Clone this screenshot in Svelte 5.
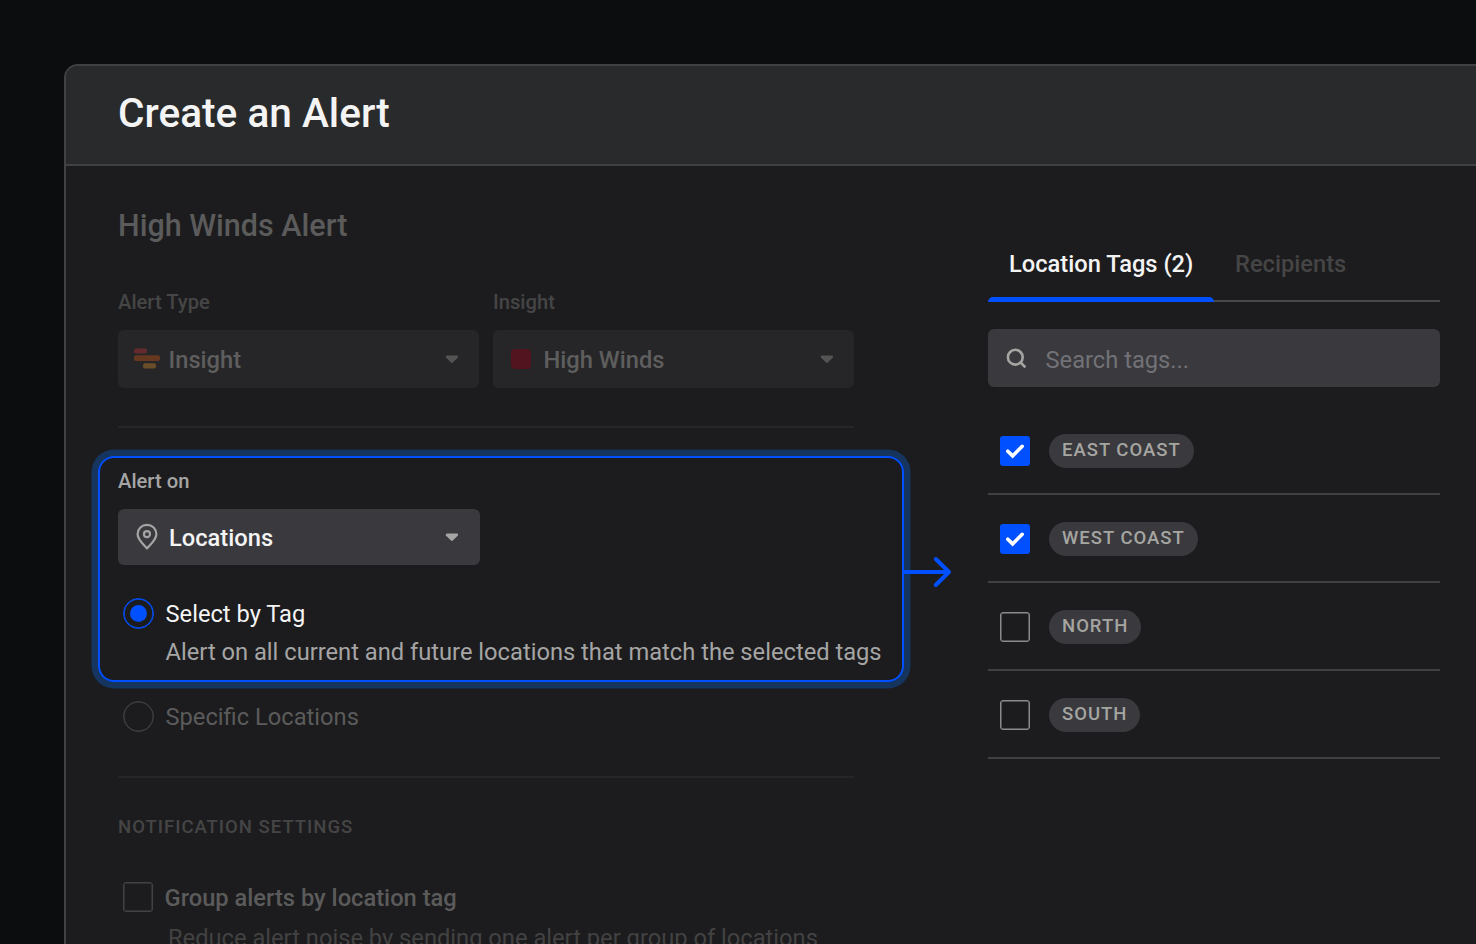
<script lang="ts">
    let tags = $state([
        { name: "East Coast", checked: true },
        { name: "West Coast", checked: true },
        { name: "North", checked: false },
        { name: "South", checked: false },
    ]);
    let selectBy = $state("tag");
    let grouped = $state(false);
    let search = $state("");

    let count = $derived(tags.filter((t) => t.checked).length);
</script>

{#snippet caret()}
    <svg class="caret" width="14" height="10" viewBox="0 0 14 10">
        <path
            d="M2 1.8h9.8L6.9 6.6z"
            fill="currentColor"
            stroke="currentColor"
            stroke-width="2.6"
            stroke-linejoin="round"
        />
    </svg>
{/snippet}

<div class="page">
    <div class="modal">
        <header>
            <h1>Create an Alert</h1>
        </header>
        <div class="body">
            <section class="form">
                <h2>High Winds Alert</h2>

                <div class="selects">
                    <div class="field muted">
                        <span class="label">Alert Type</span>
                        <button class="select">
                            <svg class="bars" width="26" height="22" viewBox="0 0 26 22">
                                <rect width="13" height="5" y="0.5" rx="2" fill="#652a2d" />
                                <rect width="26" height="5.6" y="7.3" rx="2" fill="#663820" />
                                <rect width="13" height="5.2" x="9" y="15.2" rx="2" fill="#6a4d29" />
                            </svg>
                            <span>Insight</span>
                            {@render caret()}
                        </button>
                    </div>
                    <div class="field muted">
                        <span class="label">Insight</span>
                        <button class="select">
                            <i class="swatch"></i>
                            <span>High Winds</span>
                            {@render caret()}
                        </button>
                    </div>
                </div>

                <hr />

                <div class="callout">
                    <span class="label">Alert on</span>
                    <button class="select active">
                        <svg class="pin" width="22" height="28" viewBox="0 0 22 28" fill="none" stroke="#a5a5a5" stroke-width="2.2">
                            <path
                                d="M11 25.4C7.6 21.6 1.6 16.5 1.6 11.2a9.4 9.4 0 0 1 18.8 0c0 5.3-6 10.4-9.4 14.2z"
                                stroke-linejoin="round"
                            />
                            <circle cx="11" cy="11.2" r="3" />
                        </svg>
                        <span>Locations</span>
                        {@render caret()}
                    </button>
                    <button class="option" onclick={() => (selectBy = "tag")}>
                        <i class="radio" class:on={selectBy === "tag"}></i>
                        <span>Select by Tag</span>
                    </button>
                    <p>Alert on all current and future locations that match the selected tags</p>
                    <svg class="arrow" width="52" height="32" viewBox="0 0 52 32" fill="none" stroke="#0050ff" stroke-width="4">
                        <path d="M0 16h46" />
                        <path d="M32.8 3L46 16 32.8 29" stroke-linecap="round" stroke-linejoin="round" />
                    </svg>
                </div>

                <button class="option specific" onclick={() => (selectBy = "location")}>
                    <i class="radio" class:on={selectBy === "location"}></i>
                    <span>Specific Locations</span>
                </button>

                <hr class="second" />

                <h3>Notification Settings</h3>
                <button class="option group" onclick={() => (grouped = !grouped)}>
                    <i class="box"></i>
                    <span>Group alerts by location tag</span>
                </button>
                <p class="hint">Reduce alert noise by sending one alert per group of locations</p>
            </section>

            <aside>
                <nav>
                    <button class="tab current">Location Tags ({count})</button>
                    <button class="tab">Recipients</button>
                </nav>
                <label class="search">
                    <svg width="22" height="22" viewBox="0 0 22 22" fill="none" stroke="#a5a5a1" stroke-width="2.6">
                        <circle cx="9.3" cy="10.2" r="7.4" />
                        <path d="M14.6 15.5l4.8 4.8" />
                    </svg>
                    <input placeholder="Search tags..." bind:value={search} />
                </label>
                <ul>
                    {#each tags as tag}
                        <li>
                            <button
                                class="box"
                                class:checked={tag.checked}
                                aria-label={tag.name}
                                onclick={() => (tag.checked = !tag.checked)}
                            >
                                {#if tag.checked}
                                    <svg width="20" height="16" viewBox="0 0 20 16" fill="none" stroke="#fff" stroke-width="3.6">
                                        <path d="M2.8 8.2l4.8 4.7 9.6-9.6" stroke-linecap="round" />
                                    </svg>
                                {/if}
                            </button>
                            <span class="tag">{tag.name}</span>
                        </li>
                    {/each}
                </ul>
            </aside>
        </div>
    </div>
</div>

<style>
    .page {
        height: 944px;
        box-sizing: border-box;
        padding: 64px 0 0 64px;
        overflow: hidden;
        background: #0b0d0f;
        font-family: Roboto, sans-serif;
        color: #f4f4f4;
    }

    .page * {
        box-sizing: border-box;
    }

    .modal {
        height: 900px;
        border: 2px solid #414143;
        border-right: 0;
        border-radius: 14px 0 0 0;
        background: #1c1c1e;
        overflow: hidden;
    }

    header {
        height: 99.5px;
        padding: 23px 52px 0;
        border-bottom: 2px solid #414143;
        background: #292a2c;
    }

    h1,
    h2,
    h3,
    p,
    ul {
        margin: 0;
        padding: 0;
        font-weight: 500;
        white-space: nowrap;
    }

    h1 {
        font-size: 40.6px;
        line-height: 49px;
    }

    button {
        border: 0;
        padding: 0;
        background: none;
        color: inherit;
        font: inherit;
        text-align: left;
        white-space: nowrap;
    }

    .body {
        display: flex;
        gap: 134px;
        padding-left: 52px;
    }

    .form {
        display: flex;
        flex-direction: column;
        flex: none;
        width: 736px;
        padding-top: 42.5px;
    }

    h2 {
        font-size: 30.5px;
        line-height: 36px;
        color: #5b5b5b;
    }

    .selects {
        display: flex;
        gap: 14px;
        margin-top: 46px;
    }

    .field {
        flex: 1;
    }

    .label {
        display: block;
        font-size: 20.2px;
        font-weight: 500;
        line-height: 24px;
        color: #a5a5a5;
    }

    .muted .label {
        color: #454545;
    }

    .select {
        display: flex;
        align-items: center;
        width: 100%;
        height: 58px;
        margin-top: 16px;
        padding: 0 20.5px 0 16px;
        border-radius: 6px;
        background: #262628;
        color: #5e5e5e;
        font-size: 23.7px;
        font-weight: 500;
    }

    .select span {
        flex: 1;
        padding-top: 2px;
    }

    .caret {
        margin-top: 1px;
        color: #535353;
    }

    .bars {
        margin-right: 8.5px;
    }

    .swatch {
        width: 20px;
        height: 20px;
        margin: 0 12.5px 0 2px;
        border-radius: 4px;
        background: #521520;
    }

    hr {
        width: 100%;
        height: 2px;
        margin: 38px 0 28px;
        border: 0;
        background: #262628;
    }

    .callout {
        position: relative;
        width: 806px;
        height: 226px;
        margin-left: -20px;
        padding: 11px 18px 0;
        border: 2px solid #0050ff;
        border-radius: 16px;
        box-shadow: 0 0 0 6.5px #15355e;
    }

    .select.active {
        width: 362px;
        height: 56px;
        margin-top: 15.5px;
        padding-right: 21px;
        background: #39393e;
        color: #f4f4f4;
    }

    .active .caret {
        margin-top: 2px;
        color: #a5a5a5;
    }

    .pin {
        margin: 1px 11px 0 2px;
    }

    .option {
        display: flex;
        align-items: center;
        gap: 11.5px;
        height: 32px;
        padding-left: 5px;
        font-size: 23.7px;
    }

    .option span {
        padding-top: 2px;
    }

    .callout .option {
        margin-top: 32.5px;
    }

    .radio {
        display: grid;
        place-items: center;
        width: 31px;
        height: 31px;
        border: 1px solid #424242;
        border-radius: 50%;
        box-shadow: inset 0 0 0 0.5px #424242;
    }

    .radio.on {
        border-color: #0050ff;
        box-shadow: inset 0 0 0 0.7px #0050ff;
    }

    .radio.on::after {
        content: "";
        width: 17px;
        height: 17px;
        border-radius: 50%;
        background: #0050ff;
    }

    p {
        padding-left: 47.5px;
        font-size: 23.7px;
        font-weight: 400;
        line-height: 30px;
        color: #a5a5a5;
    }

    .callout p {
        margin-top: 8px;
    }

    .arrow {
        position: absolute;
        left: 803px;
        top: 98px;
    }

    .specific {
        margin-top: 18px;
        color: #5b5b5b;
    }

    hr.second {
        margin: 44px 0 37px;
    }

    h3 {
        font-size: 18.5px;
        line-height: 24px;
        letter-spacing: 1px;
        text-transform: uppercase;
        color: #454545;
    }

    .group {
        margin-top: 42px;
        color: #5b5b5b;
        font-weight: 500;
    }

    .hint {
        margin-top: 10px;
        padding-left: 50px;
        color: #424242;
    }

    aside {
        flex: none;
        width: 452px;
        padding-top: 66.5px;
    }

    nav {
        display: flex;
        height: 70px;
        border-bottom: 2px solid #48484a;
    }

    .tab {
        height: 70px;
        padding: 0 21px 6px;
        color: #454545;
        font-size: 23.7px;
        font-weight: 500;
    }

    .tab.current {
        position: relative;
        width: 226px;
        color: #f4f4f4;
    }

    .tab.current::after {
        content: "";
        position: absolute;
        left: 0;
        right: 0;
        bottom: 0;
        height: 5px;
        border-radius: 5px 5px 0 0;
        background: #0050ff;
    }

    .search {
        display: flex;
        align-items: center;
        gap: 17.5px;
        height: 58px;
        margin-top: 27px;
        padding: 0 18px;
        border-radius: 6px;
        background: #39393e;
    }

    input {
        flex: 1;
        padding: 3px 0 0;
        border: 0;
        outline: 0;
        background: none;
        color: #f4f4f4;
        font: 23.7px Roboto, sans-serif;
    }

    input::placeholder {
        color: #727276;
    }

    ul {
        margin-top: 20px;
        list-style: none;
    }

    li {
        display: flex;
        align-items: center;
        gap: 19px;
        height: 88px;
        padding: 1px 12px 0;
        border-bottom: 2px solid #414143;
    }

    .box {
        display: grid;
        place-items: center;
        width: 30px;
        height: 30px;
        border: 1px solid #8b8b8b;
        border-radius: 3px;
        box-shadow: inset 0 0 0 0.5px #8b8b8b;
    }

    .group .box {
        border-color: #424242;
        box-shadow: inset 0 0 0 0.5px #424242;
    }

    .box.checked {
        border: 0;
        background: #0050ff;
        box-shadow: none;
    }

    .tag {
        height: 34px;
        padding: 0 13px;
        border-radius: 17px;
        background: #39393e;
        color: #a5a5a1;
        font-size: 18.5px;
        font-weight: 500;
        line-height: 32px;
        letter-spacing: 1px;
        text-transform: uppercase;
    }
</style>
